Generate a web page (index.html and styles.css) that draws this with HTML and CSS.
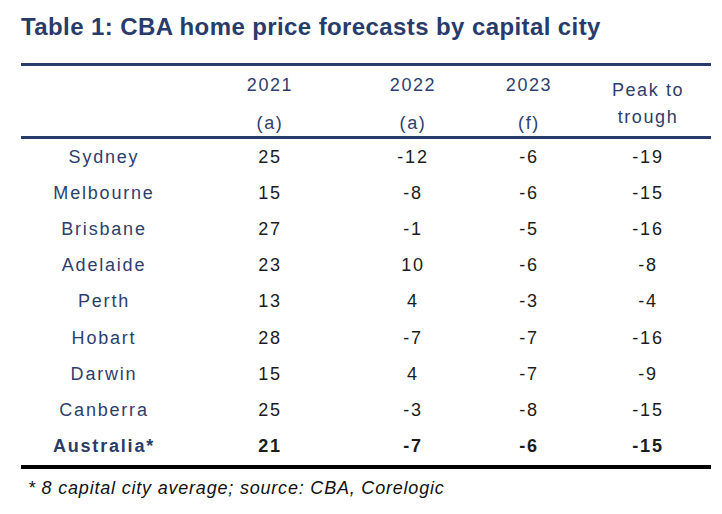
FILE: index.html
```html
<!DOCTYPE html>
<html lang="en">
<head>
<meta charset="utf-8">
<title>Table 1: CBA home price forecasts by capital city</title>
<link rel="stylesheet" href="styles.css">
</head>
<body>
<div class="page">
  <h1 class="title">Table 1: CBA home price forecasts by capital city</h1>
  <div class="table">
    <div class="head">
      <div class="hcell"></div>
      <div class="hcell year"><span>2021</span><span>(a)</span></div>
      <div class="hcell year"><span>2022</span><span>(a)</span></div>
      <div class="hcell year"><span>2023</span><span>(f)</span></div>
      <div class="hcell peak"><span>Peak to</span><span>trough</span></div>
    </div>
    <div class="body">
      <div class="row"><div class="city">Sydney</div><div class="num">25</div><div class="num">-12</div><div class="num">-6</div><div class="num">-19</div></div>
      <div class="row"><div class="city">Melbourne</div><div class="num">15</div><div class="num">-8</div><div class="num">-6</div><div class="num">-15</div></div>
      <div class="row"><div class="city">Brisbane</div><div class="num">27</div><div class="num">-1</div><div class="num">-5</div><div class="num">-16</div></div>
      <div class="row"><div class="city">Adelaide</div><div class="num">23</div><div class="num">10</div><div class="num">-6</div><div class="num">-8</div></div>
      <div class="row"><div class="city">Perth</div><div class="num">13</div><div class="num">4</div><div class="num">-3</div><div class="num">-4</div></div>
      <div class="row"><div class="city">Hobart</div><div class="num">28</div><div class="num">-7</div><div class="num">-7</div><div class="num">-16</div></div>
      <div class="row"><div class="city">Darwin</div><div class="num">15</div><div class="num">4</div><div class="num">-7</div><div class="num">-9</div></div>
      <div class="row"><div class="city">Canberra</div><div class="num">25</div><div class="num">-3</div><div class="num">-8</div><div class="num">-15</div></div>
      <div class="row total"><div class="city">Australia*</div><div class="num">21</div><div class="num">-7</div><div class="num">-6</div><div class="num">-15</div></div>
    </div>
  </div>
  <p class="note">* 8 capital city average; source: CBA, Corelogic</p>
</div>
</body>
</html>
```
FILE: styles.css
```css
html, body {
  margin: 0;
  padding: 0;
  background: #ffffff;
}
.page {
  width: 722px;
  height: 514px;
  padding: 0 0 0 21px;
  box-sizing: border-box;
  font-family: "Liberation Sans", Arial, sans-serif;
}
.title {
  margin: 0;
  padding-top: 12px;
  height: 63px;
  box-sizing: border-box;
  font-size: 24px;
  line-height: 30px;
  font-weight: bold;
  color: #283b6a;
  letter-spacing: 0.4px;
}
.table {
  width: 690px;
}
.head, .row {
  display: grid;
  grid-template-columns: 166px 166px 120px 112px 126px;
}
.head {
  border-top: 3px solid #283b6a;
  border-bottom: 3px solid #283b6a;
  height: 76px;
  box-sizing: border-box;
}
.hcell {
  display: flex;
  flex-direction: column;
  justify-content: center;
  align-items: center;
  color: #2e3e6c;
  font-size: 18px;
  letter-spacing: 1.6px;
}
.year {
  line-height: 38px;
  padding-bottom: 4px;
}
.peak {
  line-height: 27px;
  padding-bottom: 4px;
}
.body {
  border-bottom: 4px solid #000000;
}
.row {
  height: 36.2px;
  align-items: center;
  font-size: 18px;
  letter-spacing: 1.8px;
}
.city {
  text-align: center;
  color: #2e3e6c;
}
.num {
  text-align: center;
  color: #1b1b1b;
}
.total {
  font-weight: bold;
}
.total .city {
  color: #2b3b6a;
}
.note {
  margin: 0;
  padding: 7px 0 0 7px;
  font-size: 18px;
  line-height: 24px;
  letter-spacing: 0.8px;
  font-style: italic;
  color: #111111;
}
```
